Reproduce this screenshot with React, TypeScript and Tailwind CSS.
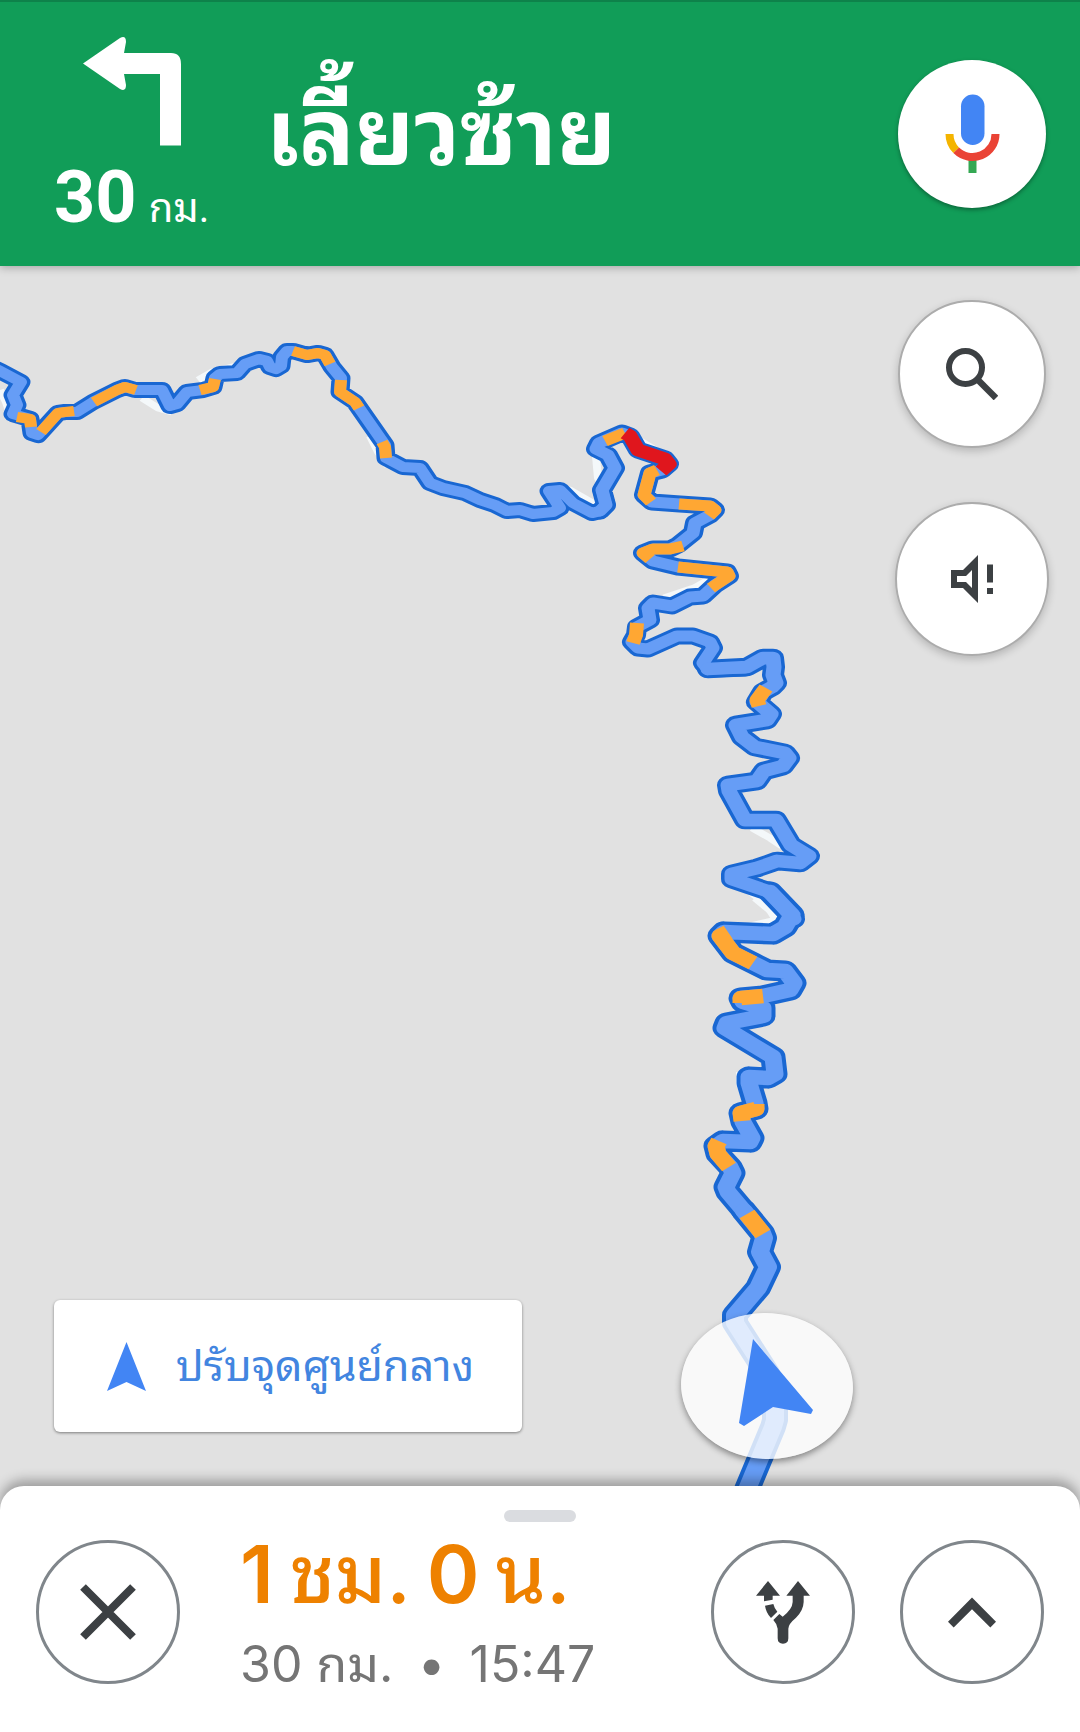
import type { ReactNode } from 'react';

const BLUE = '#669df6';
const BLUE_EDGE = '#1967d2';
const ORANGE = '#ffa733';
const RED = '#e0161d';

// The line gets wider as the road comes nearer to the viewer
const route = [
  {
    width: 19, inner: 12,
    points: '-8,367 0,371 21,382 13,395 17,405 13,414 30,419 32,433 38,435 58,413 65,412 77,412 93,402 117,390 125,387 135,390 162,390 166,398 170,406 177,404 187,392 203,390 213,387 215,378 220,374 237,373 245,364 259,359 267,361 270,367 276,369 281,366 282,357 287,351 293,351 307,355 318,353 325,355 332,367 341,378 340,392 355,402 385,445 386,458 403,467 420,468 430,483 443,488 465,493 480,500 495,505 507,511 520,510 533,514 553,512 560,508 549,491 560,490 573,503 592,513 600,511 606,505 602,490',
  },
  {
    width: 20, inner: 13,
    points: '600,511 606,505 602,490 615,468 608,455 596,449 599,443 622,433 630,436 638,450 665,459 669,464 662,470 650,473 644,495 652,502 680,504 710,506 715,510 710,515 695,523 693,533 678,545 670,549 653,549 643,553 653,561 678,567 727,572 729,576 715,585 703,596 690,597 672,606 653,603 648,608 650,620 637,627 636,635 632,642 638,648 648,649 677,636 693,636 710,642 713,648 703,663 708,669 745,668',
  },
  {
    width: 22, inner: 15,
    points: '708,669 747,667 763,658 773,658 774,667 773,675 776,683 772,687 763,692 757,702 771,714 767,720 736,725 742,737 755,747 785,753 789,758 783,766 764,771 757,781 728,785 729,791 745,820 776,820 791,845 809,856 800,863 777,861 757,868 732,874 732,879 770,892 794,919',
  },
  {
    width: 25, inner: 17,
    points: '770,892 792,915 785,927 773,934 724,932 720,936 733,953 753,963 767,970 785,971 794,983 790,990 763,996 741,998 743,1002 763,1008 763,1016 727,1023 725,1028 773,1057 775,1074 768,1078 749,1077 749,1083 755,1103 756,1109 741,1113 743,1122 752,1138 750,1142 723,1141 716,1146 718,1154 730,1167 733,1173 726,1187 728,1192 744,1211',
  },
  {
    width: 26, inner: 18,
    points: '744,1211 762,1233 764,1238 760,1252 768,1267 758,1288 735,1315 735,1323 767,1373 775,1395 775,1420 773,1427 738,1511',
  },
];

const traffic = [
  { color: ORANGE, width: 12, points: '17,417 30,419 31,427' },
  { color: ORANGE, width: 12, points: '41,432 58,413 65,412 74,411' },
  { color: ORANGE, width: 12, points: '94,402 117,390 125,387 136,390' },
  { color: ORANGE, width: 12, points: '200,390 213,387 215,379' },
  { color: ORANGE, width: 12, points: '293,351 307,355 318,353 325,355 330,364' },
  { color: ORANGE, width: 12, points: '341,380 340,392 355,402 359,408' },
  { color: ORANGE, width: 12, points: '382,442 385,447 386,458' },
  { color: ORANGE, width: 13, points: '605,441 625,433' },
  { color: RED, width: 15, points: '625,433 630,436 638,450 665,459 669,464 661,471' },
  { color: ORANGE, width: 13, points: '657,470 650,473 644,495 651,502' },
  { color: ORANGE, width: 13, points: '679,504 710,506 715,510 709,516' },
  { color: ORANGE, width: 13, points: '683,546 670,549 653,549 643,553 650,559' },
  { color: ORANGE, width: 13, points: '678,567 727,572 729,576 711,588' },
  { color: ORANGE, width: 14, points: '637,623 636,635 633,643' },
  { color: ORANGE, width: 15, points: '766,688 763,692 757,700 759,706' },
  { color: ORANGE, width: 17, points: '728,932 720,936 733,953 753,963' },
  { color: ORANGE, width: 17, points: '763,996 741,998 741,1003' },
  { color: ORANGE, width: 17, points: '756,1104 756,1109 741,1113 742,1121' },
  { color: ORANGE, width: 17, points: '719,1141 716,1146 718,1154 729,1167' },
  { color: ORANGE, width: 18, points: '747,1214 763,1234' },
];

// Base map road that peeks out beside the route
const ghostRoads = [
  '0,390 6,402 12,420',
  '142,398 158,408 172,412',
  '198,380 212,372 236,366',
  '370,436 378,452 388,466',
  '598,506 570,490 560,488',
  '596,456 598,478 606,494',
  '632,436 652,448 668,458',
  '708,580 694,588 664,598',
  '752,828 770,838 782,846',
  '755,898 772,912 780,920',
  '740,884 766,904 776,920 750,926',
  '740,1072 740,1084 748,1104',
];

// The map is seen by a tilted camera, so strokes are flatter than they are wide
const TILT = 0.85;

function tilt(points: string) {
  return points
    .split(' ')
    .map(p => {
      const [x, y] = p.split(',').map(Number);
      return `${x},${y / TILT}`;
    })
    .join(' ');
}

function Route() {
  return (
    <svg viewBox="0 266 1080 1244" preserveAspectRatio="xMidYMid slice" className="absolute inset-0 h-full w-full" fill="none" aria-hidden="true">
      <g transform={`scale(1 ${TILT})`} strokeLinejoin="round">
        <g stroke="#f4f8fa" strokeWidth={8}>
          {ghostRoads.map(p => <polyline key={p} points={tilt(p)} />)}
        </g>
        <g stroke={BLUE_EDGE} strokeLinecap="round">
          {route.map(r => <polyline key={r.points} points={tilt(r.points)} strokeWidth={r.width} />)}
        </g>
        <g stroke={BLUE} strokeLinecap="round">
          {route.map(r => <polyline key={r.points} points={tilt(r.points)} strokeWidth={r.inner} />)}
        </g>
        {traffic.map(t => <polyline key={t.points} points={tilt(t.points)} stroke={t.color} strokeWidth={t.width} />)}
      </g>

      {/* Position puck */}
      <defs>
        <filter id="puck" x="-20%" y="-20%" width="140%" height="150%">
          <feGaussianBlur stdDeviation="3" />
        </filter>
        <mask id="outside">
          <rect x="600" y="1200" width="400" height="320" fill="#fff" />
          <ellipse cx="767" cy="1386" rx="86" ry="73" transform="rotate(4 767 1386)" fill="#000" />
        </mask>
      </defs>
      <g mask="url(#outside)">
        <ellipse cx="767" cy="1389" rx="86" ry="73" transform="rotate(4 767 1389)" fill="#000" fillOpacity="0.4" filter="url(#puck)" />
      </g>
      <ellipse cx="767" cy="1386" rx="86" ry="73" transform="rotate(4 767 1386)" fill="#fff" fillOpacity="0.8" />
      <path d="M753 1339 L813 1410 L811 1414 L773 1407 L744 1426 L739 1423 Z" fill="#4285f4" />
    </svg>
  );
}

function TurnLeftIcon() {
  return (
    <svg viewBox="83 36 98 110" className="h-[110px] w-[98px]" fill="#fff" aria-hidden="true">
      <path d="M83 63.5 L120 38 Q126 35 126 42 L124 53 H171 Q181 53 181 64 V145.5 H160 V74 H124 L126 85 Q126 92 120 89 Z" />
    </svg>
  );
}

function MicIcon() {
  return (
    <svg viewBox="944 94 55 80" className="h-20 w-[55px]" fill="none" aria-hidden="true">
      <rect x="960" y="94.5" width="23.5" height="50.5" rx="11.7" fill="#4285f4" />
      <path d="M967.5 159 h8 v14 h-8 z" fill="#34a853" />
      <path d="M948.5 134 A23 23 0 0 0 955.2 150.3" stroke="#f4b400" strokeWidth="8" />
      <path d="M955.2 150.3 A23 23 0 0 0 994.5 134" stroke="#ea4335" strokeWidth="8" />
    </svg>
  );
}

function SearchIcon() {
  return (
    <svg viewBox="945 347 52 52" className="size-[52px]" fill="none" stroke="#3c4043" aria-hidden="true">
      <circle cx="964.5" cy="366.5" r="16.5" strokeWidth="6" />
      <path d="M977 379 L995 397" strokeWidth="6.5" />
    </svg>
  );
}

function AlertsOnlyIcon() {
  return (
    <svg viewBox="951 556 42 48" className="h-12 w-[42px]" fill="#3c4043" aria-hidden="true">
      <path fillRule="evenodd" d="M951 571 H963 L978 556 V604 L963 589 H951 Z M957 577 H966 L972 571 V589 L966 583 H957 Z" />
      <path d="M987 565.5 h6 v18 h-6 z M987 589 h6 v6 h-6 z" />
    </svg>
  );
}

function ForkIcon() {
  return (
    <svg viewBox="229 303 162 189" className="h-[63px] w-[54px]" aria-hidden="true">
      <g fill="#3c4043">
        <path d="M265 303 L301 347 H279 V359 L253 364 V347 H229 Z" />
        <path d="M256 377 L281 372 Q284 385 293 395 L274 414 Q259 398 256 377 Z" />
        <path d="M281 420 L299 402 L309 410 Q338 388 339 366 V347 H320 L355 303 L391 347 H372 V366 Q371 392 349 413 Q326 432 326 446 V475 Q326 491 310 491 Q294 491 294 475 V446 Q293 433 281 420 Z" />
      </g>
    </svg>
  );
}

function MapButton({ label, className, children }: { label: string; className: string; children: ReactNode }) {
  return (
    <button type="button" aria-label={label} className={`flex shrink-0 items-center justify-center rounded-full bg-white ${className}`}>
      {children}
    </button>
  );
}

function SheetButton({ label, children }: { label: string; children: ReactNode }) {
  return (
    <button type="button" aria-label={label} className="flex size-36 shrink-0 items-center justify-center rounded-full border-[3px] border-[#80868b] bg-white">
      {children}
    </button>
  );
}

export default function App() {
  return (
    <div className="flex min-h-screen flex-col overflow-hidden bg-[#e1e1e1] font-[Roboto,'Noto_Sans_Thai_Looped','Noto_Looped_Thai',Loma,'Noto_Sans',sans-serif]">
      {/* Next turn */}
      <header className="relative z-10 flex h-[266px] items-start border-t-2 border-[#0e824a] bg-[#119d58] pr-[34px] pl-[54px] text-white shadow-[0_2px_8px_rgba(0,0,0,0.25)]">
        <div className="flex w-[212px] shrink-0 flex-col pt-[34px]">
          <div className="pl-[29px]"><TurnLeftIcon /></div>
          <p className="flex items-baseline gap-3 leading-[104px] whitespace-nowrap">
            <span className="text-[72px] font-bold">30</span>
            <span className="text-[40px]">กม.</span>
          </p>
        </div>
        <h1 className="flex-1 pt-[72px] text-[92px] leading-[120px] font-bold whitespace-nowrap">เลี้ยวซ้าย</h1>
        <div className="pt-[58px]">
          <MapButton label="ค้นหาด้วยเสียง" className="size-[148px] shadow-[0_2px_4px_rgba(0,0,0,0.35)]"><MicIcon /></MapButton>
        </div>
      </header>

      {/* Map */}
      <main className="relative flex flex-1 flex-col justify-between">
        <Route />
        <div className="relative flex flex-col items-end gap-[54px] pt-[34px] pr-[31px]">
          <div className="pr-[3px]">
            <MapButton label="ค้นหา" className="size-[148px] border-2 border-[#acacac] shadow-[0_3px_8px_rgba(0,0,0,0.2)]"><SearchIcon /></MapButton>
          </div>
          <MapButton label="เสียง" className="size-[154px] border-2 border-[#acacac] shadow-[0_3px_8px_rgba(0,0,0,0.2)]"><AlertsOnlyIcon /></MapButton>
        </div>
        <div className="relative px-[54px] pb-[78px]">
          <button type="button" className="flex h-[132px] w-[468px] items-center gap-[30px] rounded-md bg-white pl-[53px] text-[43px] leading-[60px] whitespace-nowrap text-[#4285e0] shadow-[0_1px_3px_rgba(0,0,0,0.45)]">
            <svg viewBox="0 0 39 49" className="h-[49px] w-[39px]" fill="#4285f4" aria-hidden="true"><path d="M19.5 0 L39 49 L19.5 40 L0 49 Z" /></svg>
            ปรับจุดศูนย์กลาง
          </button>
        </div>
      </main>

      {/* Trip summary */}
      <footer className="relative -mt-6 rounded-t-3xl bg-white px-9 pt-6 pb-[34px] shadow-[0_-6px_12px_rgba(0,0,0,0.3)]">
        <div className="mx-auto h-3 w-[72px] rounded-full bg-[#dadce0]" />
        <div className="mt-[18px] flex items-start">
          <SheetButton label="ปิด">
            <svg viewBox="0 0 56 56" className="size-14" fill="none" stroke="#3c4043" strokeWidth="8" aria-hidden="true"><path d="M3 3 L53 53 M53 3 L3 53" /></svg>
          </SheetButton>
          <div className="ml-[60px] flex flex-1 flex-col gap-[22px] font-[Inter,'Noto_Sans_Thai_Looped','Noto_Looped_Thai',Loma,'Noto_Sans',sans-serif] leading-[68px] whitespace-nowrap">
            <p className="flex gap-4 text-[80px] font-medium text-[#ee8100]">
              <span className="font-semibold">1</span>
              <span>ชม.</span>
              <span className="font-semibold">0</span>
              <span>น.</span>
            </p>
            <p className="flex gap-6 text-[50px] text-[#757575]"><span>30 กม.</span><span>•</span><span>15:47</span></p>
          </div>
          <div className="flex gap-[45px]">
            <SheetButton label="เส้นทางอื่น"><ForkIcon /></SheetButton>
            <SheetButton label="ขยาย">
              <svg viewBox="804 347 144 92" className="h-[31px] w-12" fill="#3c4043" aria-hidden="true"><path d="M876 348 L948 421 L931 438 L876 383 L821 438 L804 421 Z" /></svg>
            </SheetButton>
          </div>
        </div>
      </footer>
    </div>
  );
}
